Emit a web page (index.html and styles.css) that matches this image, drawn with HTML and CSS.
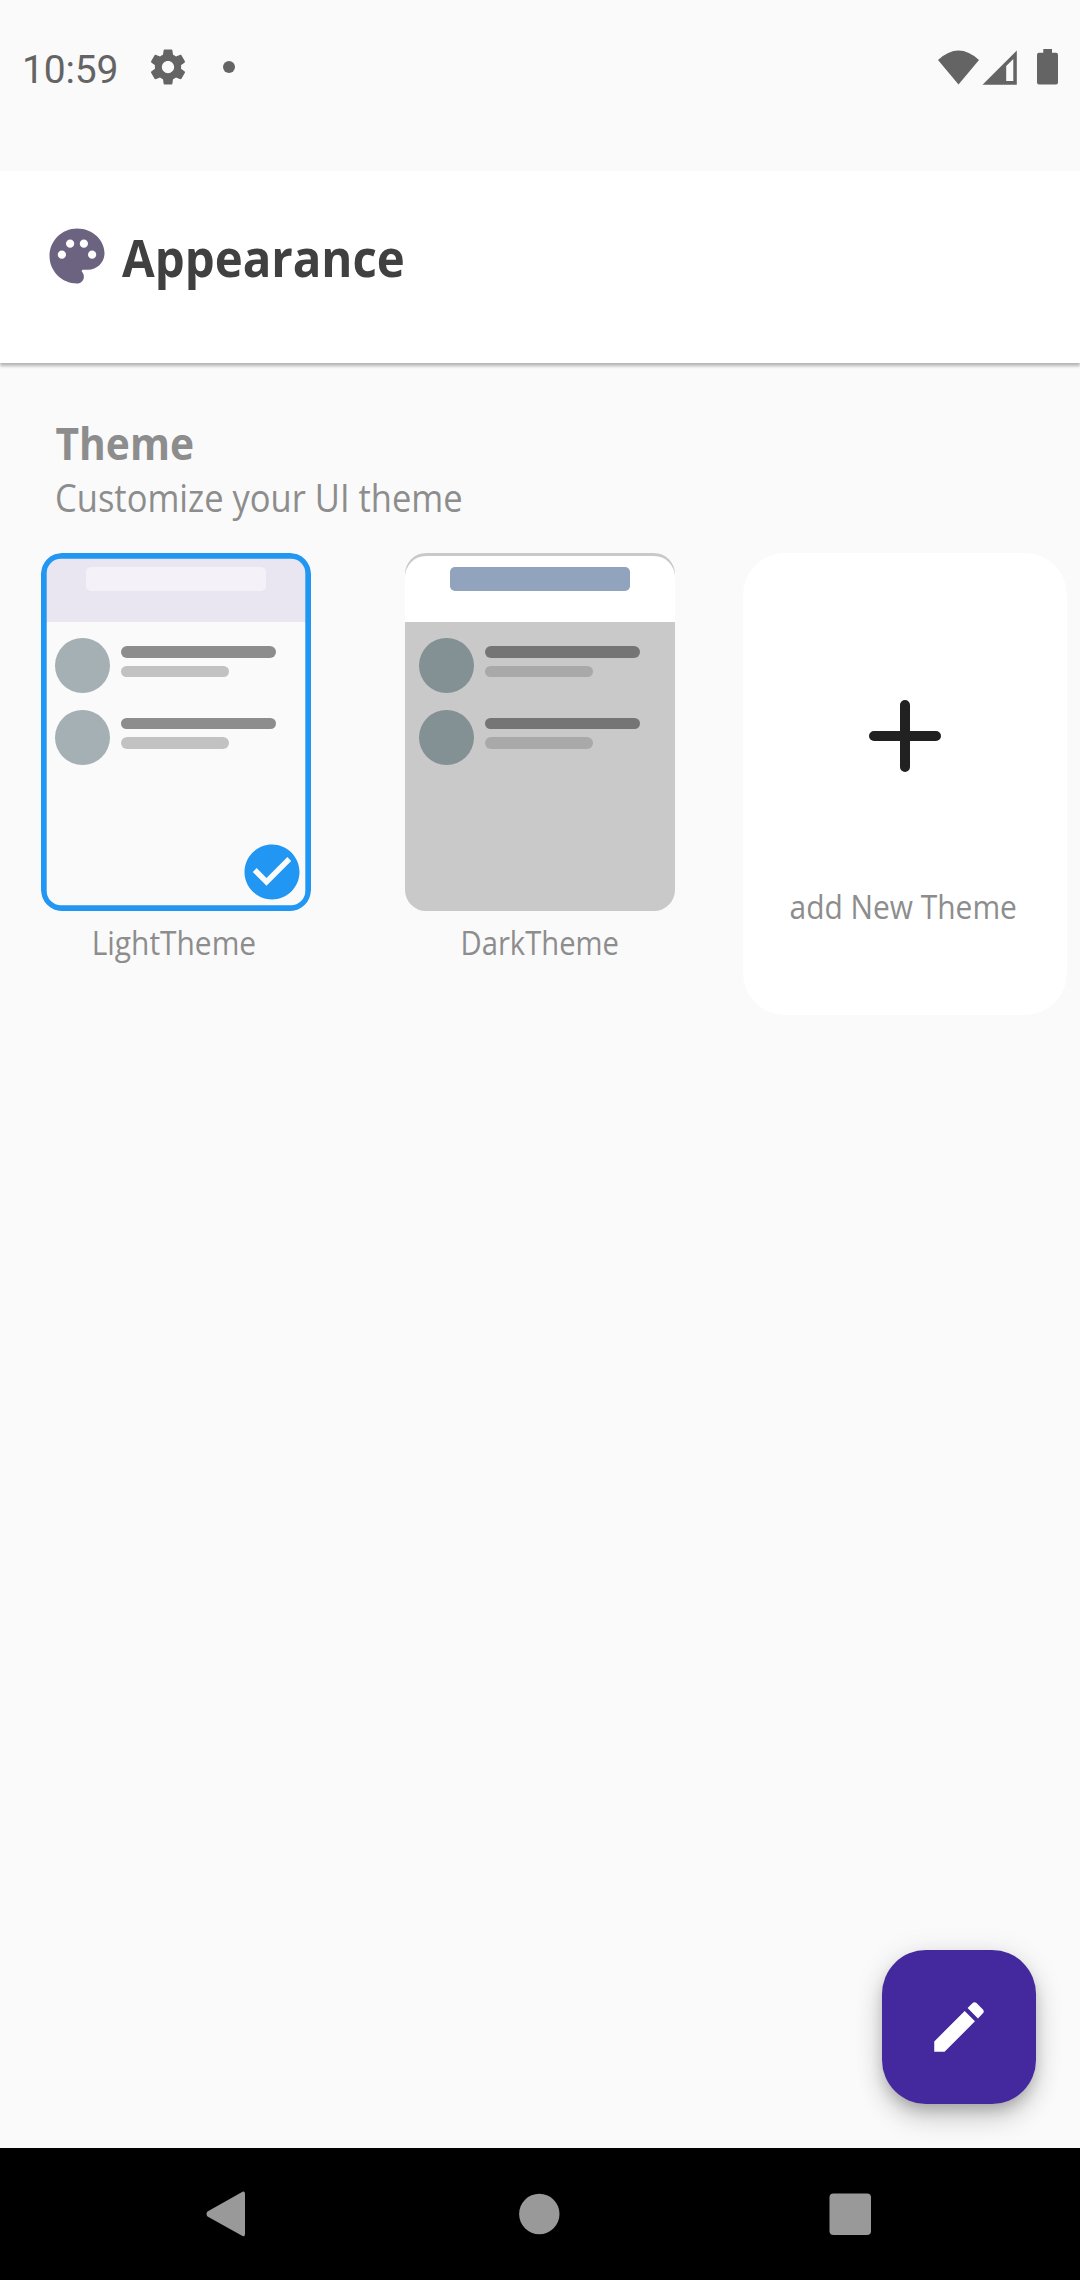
FILE: index.html
```html
<!DOCTYPE html>
<html lang="en">
<head>
<meta charset="utf-8">
<title>Appearance</title>
<link rel="stylesheet" href="styles.css">
</head>
<body>
<div class="screen">
  <div class="status">
    <span class="clock">10:59</span>
    <svg class="gear" viewBox="0 0 24 24"><path d="M19.43 12.98c.04-.32.07-.64.07-.98s-.03-.66-.07-.98l2.11-1.65c.19-.15.24-.42.12-.64l-2-3.46c-.12-.22-.39-.3-.61-.22l-2.49 1c-.52-.4-1.08-.73-1.69-.98l-.38-2.65C14.46 2.18 14.25 2 14 2h-4c-.25 0-.46.18-.49.42l-.38 2.65c-.61.25-1.17.59-1.69.98l-2.49-1c-.23-.09-.49 0-.61.22l-2 3.46c-.13.22-.07.49.12.64l2.11 1.65c-.04.32-.07.65-.07.98s.03.66.07.98l-2.11 1.65c-.19.15-.24.42-.12.64l2 3.46c.12.22.39.3.61.22l2.49-1c.52.4 1.08.73 1.69.98l.38 2.65c.03.24.24.42.49.42h4c.25 0 .46-.18.49-.42l.38-2.65c.61-.25 1.17-.59 1.69-.98l2.49 1c.23.09.49 0 .61-.22l2-3.46c.12-.22.07-.49-.12-.64l-2.11-1.65zM12 15.5c-1.93 0-3.5-1.57-3.5-3.5s1.57-3.5 3.5-3.5 3.5 1.57 3.5 3.5-1.57 3.5-3.5 3.5z"/></svg>
    <span class="dot"></span>
    <svg class="signals" viewBox="0 0 122 36">
      <path d="M0 11Q20.500-8 41 11L20.500 35.500z"/>
      <path fill-rule="evenodd" d="M44.500 35.700L78.800 1.500V35.700zM68.200 17V32H75.300V10z"/>
      <path d="M105.300 0h8.700v3.700h4a2 2 0 0 1 2 2v27.800a2 2 0 0 1-2 2h-17a2 2 0 0 1-2-2V5.700a2 2 0 0 1 2-2h4.300z"/>
    </svg>
  </div>

  <header class="header">
    <svg class="palette" viewBox="0 0 24 24"><path d="M12 2C6.490 2 2 6.490 2 12s4.490 10 10 10c1.380 0 2.500-1.120 2.500-2.500 0-.61-.23-1.200-.64-1.670-.08-.1-.13-.21-.13-.33 0-.28.22-.5.5-.5H16c3.310 0 6-2.690 6-6 0-4.960-4.490-9-10-9zM6.500 13a1.500 1.500 0 1 1 0-3 1.500 1.500 0 0 1 0 3zm3-4a1.500 1.500 0 1 1 0-3 1.500 1.500 0 0 1 0 3zm5 0a1.500 1.500 0 1 1 0-3 1.500 1.500 0 0 1 0 3zm3 4a1.500 1.500 0 1 1 0-3 1.500 1.500 0 0 1 0 3z"/></svg>
    <h1 class="title">Appearance</h1>
  </header>

  <main class="content">
    <h2 class="section-title">Theme</h2>
    <p class="section-text">Customize your UI theme</p>
    <div class="themes">
      <div class="theme">
        <div class="preview light">
          <div class="bar"><span class="pill"></span></div>
          <div class="item"><span class="avatar"></span><div class="lines"><span class="line"></span><span class="line short"></span></div></div>
          <div class="item"><span class="avatar"></span><div class="lines"><span class="line"></span><span class="line short"></span></div></div>
          <svg class="check" viewBox="0 0 24 24"><path d="M12 2C6.480 2 2 6.480 2 12s4.480 10 10 10 10-4.480 10-10S17.520 2 12 2zm-2 15l-5-5 1.410-1.410L10 14.170l7.590-7.590L19 8l-9 9z"/></svg>
        </div>
        <span class="label">LightTheme</span>
      </div>
      <div class="theme">
        <div class="preview dark">
          <div class="bar"><span class="pill"></span></div>
          <div class="item"><span class="avatar"></span><div class="lines"><span class="line"></span><span class="line short"></span></div></div>
          <div class="item"><span class="avatar"></span><div class="lines"><span class="line"></span><span class="line short"></span></div></div>
        </div>
        <span class="label label-dark">DarkTheme</span>
      </div>
      <div class="add">
        <svg class="plus" viewBox="0 0 72 72"><path d="M36 5V67M5 36H67"/></svg>
        <span class="label">add New Theme</span>
      </div>
    </div>
  </main>

  <div class="fab"><svg class="pencil" viewBox="0 0 24 24"><path d="M3 17.250V21h3.750L17.810 9.940l-3.750-3.750L3 17.250zM20.710 7.040c.39-.39.39-1.020 0-1.410l-2.340-2.340c-.39-.39-1.020-.39-1.410 0l-1.830 1.830 3.750 3.750 1.830-1.830z"/></svg></div>

  <nav class="nav">
    <svg class="nav-icons" viewBox="0 0 666 46">
      <path d="M37 .6Q39 0 39 3V43Q39 46 36.500 45L1.500 25.500Q-.5 23 1.500 20.500z"/>
      <circle cx="333.300" cy="23" r="20.200"/>
      <rect x="623.500" y="2.500" width="41.500" height="41.500" rx="4"/>
    </svg>
  </nav>
</div>
</body>
</html>
```
FILE: styles.css
```css
* { box-sizing: border-box; }
body { margin: 0; background: #fafafa; font-family: "Open Sans", "Noto Sans", sans-serif; }
h1, h2, p { margin: 0; }
.screen { position: relative; display: flex; flex-direction: column; width: 1080px; height: 2280px; overflow: hidden; background: #fafafa; }

.status { display: flex; align-items: flex-start; height: 171px; padding: 46px 20px 0 22px; color: #646464; fill: #646464; }
.clock { width: 125px; padding-top: 1px; font: 400 39px/46px Roboto, sans-serif; letter-spacing: -.2px; }
.gear { width: 42px; height: 42px; }
.dot { width: 12px; height: 12px; margin: 15px 0 0 34px; border-radius: 50%; background: #646464; }
.signals { width: 122px; height: 36px; margin: 3px 0 0 auto; }

.header { z-index: 1; display: flex; height: 192px; padding: 46px 44px; background: #fff; box-shadow: 0 3px 3px rgba(0, 0, 0, .28); }
.palette { width: 66px; height: 66px; margin-top: 5.7px; fill: #6c6380; }
.title { margin-left: 12px; font-size: 52px; line-height: 80px; color: #404040; transform: scaleX(.911); transform-origin: left; }

.content { flex: 1; padding: 50.5px 0 0 40.500px; color: #8d8d8d; }
.section-title { padding-left: 14.500px; font-size: 45px; line-height: 58px; transform: scaleX(.905); transform-origin: 14.500px 0; }
.section-text { padding-left: 14px; font-size: 37.500px; line-height: 52px; transform: scaleX(.92); transform-origin: 14px 0; }
.themes { display: flex; align-items: flex-start; margin-top: 29.500px; }
.theme { display: flex; flex-direction: column; align-items: center; width: 270px; margin-right: 94px; }
.preview { position: relative; width: 270px; height: 357.500px; overflow: hidden; border-radius: 21px; }
.bar { display: flex; justify-content: center; height: 68.700px; padding-top: 13.700px; }
.pill { width: 180px; height: 24.700px; border-radius: 5px; }
.item { display: flex; gap: 11px; height: 55px; margin: 16.500px 0 0 14.500px; }
.lines { display: flex; flex-direction: column; gap: 8px; padding-top: 8.300px; }
.avatar { width: 55px; height: 55px; border-radius: 50%; }
.line { width: 155px; height: 11.300px; border-radius: 6px; }
.short { width: 108px; }
.light .bar { background: #eae6f1; }
.light .pill { background: #f4f1f9; }
.light .avatar { background: #a4b0b4; }
.light .line { background: #8d8d8d; }
.light .short { background: #c2c2c2; }
.light::after { content: ""; position: absolute; inset: 0; border-radius: 20px; box-shadow: inset 0 0 0 5.700px #2196f3, 0 0 0 1px #fafafa; }
.dark { background: #c9c9c9; }
.dark .bar { height: 65.700px; margin-top: 3px; padding-top: 10.500px; border-radius: 21px 21px 0 0; background: #fff; }
.dark .pill { background: #92a3bd; }
.dark .avatar { background: #849194; }
.dark .line { background: #757575; }
.dark .short { background: #a9a9a9; }
.check { position: absolute; right: 5.500px; bottom: 5.500px; width: 66px; height: 66px; fill: #2196f3; }
.label { margin-top: 10.500px; font-size: 32.700px; line-height: 44px; white-space: nowrap; transform: scaleX(.915); }
.theme .label { margin-right: 3px; }
.theme .label-dark { margin-right: 0; transform: scaleX(.893); }
.add { display: flex; flex-direction: column; align-items: center; width: 323.500px; height: 462px; margin-left: -25.500px; padding-top: 147px; border-radius: 42px; background: #fff; }
.plus { width: 72px; height: 72px; fill: none; stroke: #212121; stroke-width: 10; stroke-linecap: round; }
.add .label { margin: 113px 3px 0 0; }

.fab { position: absolute; left: 882px; top: 1950px; display: flex; align-items: center; justify-content: center; width: 154px; height: 154px; border-radius: 44px; background: #44289d; box-shadow: 0 8px 14px -3px rgba(0, 0, 0, .2), 0 16px 27px rgba(0, 0, 0, .14), 0 3px 30px rgba(0, 0, 0, .1); }
.pencil { width: 66px; height: 66px; fill: #fff; }

.nav { z-index: 1; display: flex; justify-content: center; height: 132px; padding: 43px 2px 0 0; background: #000; }
.nav-icons { width: 666px; height: 46px; fill: #999; }
```
